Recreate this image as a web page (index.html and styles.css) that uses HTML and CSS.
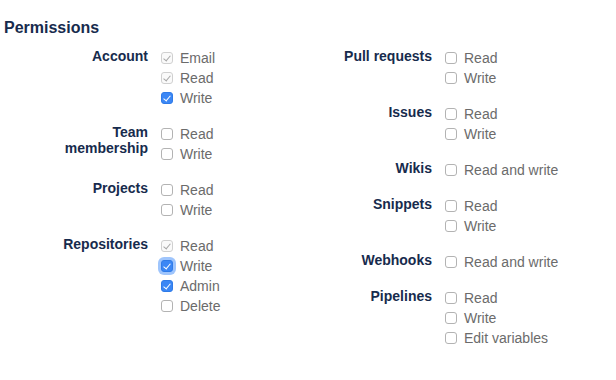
FILE: index.html
```html
<!DOCTYPE html>
<html lang="en">
<head>
    <meta charset="UTF-8">
    <title>Permissions</title>
    <link rel="stylesheet" href="styles.css">
</head>
<body>
    <h2 class="title">Permissions</h2>

    <div class="perm-columns">
        <div class="perm-col">
            <div class="perm-group">
                <div class="perm-label">Account</div>
                <div class="perm-options">
                    <label class="option"><span class="box checked disabled"></span>Email</label>
                    <label class="option"><span class="box checked disabled"></span>Read</label>
                    <label class="option"><span class="box checked"></span>Write</label>
                </div>
            </div>
            <div class="perm-group">
                <div class="perm-label">Team membership</div>
                <div class="perm-options">
                    <label class="option"><span class="box"></span>Read</label>
                    <label class="option"><span class="box"></span>Write</label>
                </div>
            </div>
            <div class="perm-group">
                <div class="perm-label">Projects</div>
                <div class="perm-options">
                    <label class="option"><span class="box"></span>Read</label>
                    <label class="option"><span class="box"></span>Write</label>
                </div>
            </div>
            <div class="perm-group">
                <div class="perm-label">Repositories</div>
                <div class="perm-options">
                    <label class="option"><span class="box checked disabled"></span>Read</label>
                    <label class="option"><span class="box checked focused"></span>Write</label>
                    <label class="option"><span class="box checked"></span>Admin</label>
                    <label class="option"><span class="box"></span>Delete</label>
                </div>
            </div>
        </div>

        <div class="perm-col">
            <div class="perm-group">
                <div class="perm-label">Pull requests</div>
                <div class="perm-options">
                    <label class="option"><span class="box"></span>Read</label>
                    <label class="option"><span class="box"></span>Write</label>
                </div>
            </div>
            <div class="perm-group">
                <div class="perm-label">Issues</div>
                <div class="perm-options">
                    <label class="option"><span class="box"></span>Read</label>
                    <label class="option"><span class="box"></span>Write</label>
                </div>
            </div>
            <div class="perm-group">
                <div class="perm-label">Wikis</div>
                <div class="perm-options">
                    <label class="option"><span class="box"></span>Read and write</label>
                </div>
            </div>
            <div class="perm-group">
                <div class="perm-label">Snippets</div>
                <div class="perm-options">
                    <label class="option"><span class="box"></span>Read</label>
                    <label class="option"><span class="box"></span>Write</label>
                </div>
            </div>
            <div class="perm-group">
                <div class="perm-label">Webhooks</div>
                <div class="perm-options">
                    <label class="option"><span class="box"></span>Read and write</label>
                </div>
            </div>
            <div class="perm-group">
                <div class="perm-label">Pipelines</div>
                <div class="perm-options">
                    <label class="option"><span class="box"></span>Read</label>
                    <label class="option"><span class="box"></span>Write</label>
                    <label class="option"><span class="box"></span>Edit variables</label>
                </div>
            </div>
        </div>
    </div>
</body>
</html>
```

FILE: styles.css
```css
* {
    margin: 0;
    padding: 0;
    box-sizing: border-box;
}

body {
    font-family: "Liberation Sans", Arial, sans-serif;
    background: #fff;
    color: #172b4d;
}

.title {
    font-size: 16px;
    font-weight: bold;
    line-height: 20px;
    padding: 18px 0 0 4px;
    margin-bottom: 10px;
    color: #172b4d;
}

.perm-columns {
    display: grid;
    grid-template-columns: 284px 1fr;
}

.perm-col {
    padding-left: 48px;
}

.perm-group {
    display: grid;
    grid-template-columns: 100px 1fr;
    column-gap: 13px;
    margin-bottom: 16px;
}

.perm-label {
    font-size: 14px;
    font-weight: bold;
    line-height: 16px;
    text-align: right;
    color: #172b4d;
}

.option {
    display: flex;
    align-items: center;
    height: 20px;
    font-size: 14px;
    color: #6b6b6b;
}

.box {
    position: relative;
    width: 12px;
    height: 12px;
    margin-right: 7px;
    border: 1px solid #b3b3b3;
    border-radius: 3px;
    background: #fff;
    flex-shrink: 0;
}

.box.checked {
    background: #3b87f5;
    border-color: #2f7be8;
}

.box.checked::after {
    content: "";
    position: absolute;
    left: 3px;
    top: 1px;
    width: 3px;
    height: 6px;
    border: solid #fff;
    border-width: 0 1.5px 1.5px 0;
    transform: rotate(40deg);
}

.box.disabled {
    background: #fafafa;
    border-color: #d0d0d0;
}

.box.disabled::after {
    border-color: #a6a6a6;
}

.box.focused {
    box-shadow: 0 0 0 3px rgba(80, 150, 250, 0.55);
}
```
